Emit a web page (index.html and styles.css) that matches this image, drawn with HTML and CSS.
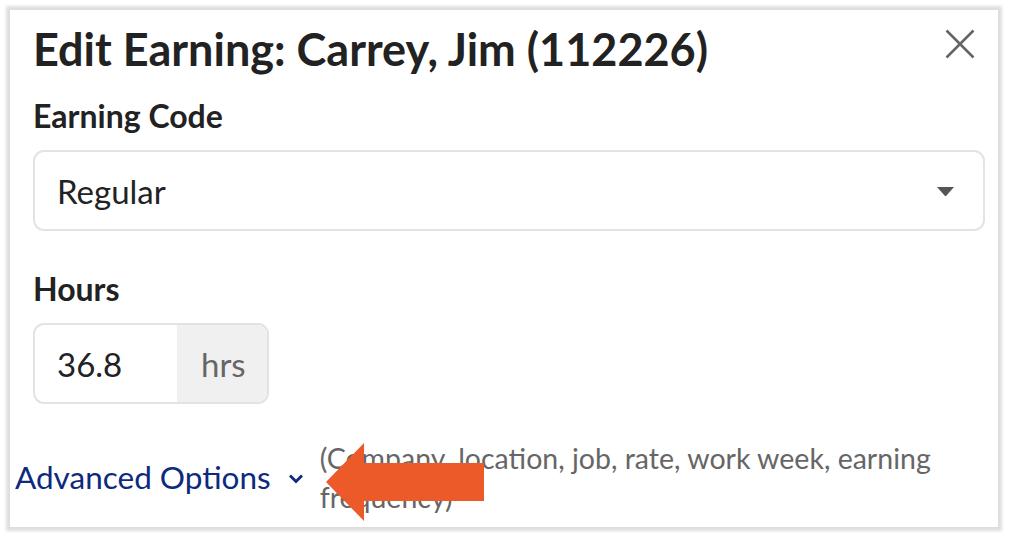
FILE: index.html
```html
<!DOCTYPE html>
<html>
<head>
<meta charset="utf-8">
<link rel="stylesheet" href="styles.css">
</head>
<body>
<div class="panel">
  <div class="header">
    <h1 class="title">Edit Earning: Carrey, Jim (112226)</h1>
    <button class="close" aria-label="Close">
      <svg width="30" height="30" viewBox="0 0 30 30"><path d="M1.5 1.5 L28.5 28.5 M28.5 1.5 L1.5 28.5" stroke="#666" stroke-width="2.6" fill="none"/></svg>
    </button>
  </div>
  <div class="field">
    <div class="label">Earning Code</div>
    <div class="select">
      <span class="select-value">Regular</span>
      <svg class="caret" width="17" height="9" viewBox="0 0 17 9"><path d="M0 0 H17 L9.5 8.5 Q8.5 9.5 7.5 8.5 Z" fill="#555"/></svg>
    </div>
  </div>
  <div class="field field-hours">
    <div class="label">Hours</div>
    <div class="input-group">
      <span class="input-value">36.8</span>
      <span class="addon">hrs</span>
    </div>
  </div>
  <div class="advanced">
    <a class="adv-link">Advanced Options
      <svg class="chev" width="16" height="11" viewBox="0 0 16 11"><path d="M2 2.5 L8 8.5 L14 2.5" stroke="#0d2a7e" stroke-width="2.8" fill="none"/></svg>
    </a>
    <p class="adv-desc">(Company, location, job, rate, work week, earning frequency)</p>
    <svg class="arrow" width="160" height="80" viewBox="0 0 160 80"><polygon points="0,39 38,0 38,20 158,20 158,58 38,58 38,78" fill="#ec5a2a"/></svg>
  </div>
</div>
</body>
</html>
```
FILE: styles.css
```css
html, body {
  margin: 0;
  padding: 0;
  background: #fff;
}
body {
  padding: 10px 0 11px 10px;
  font-family: "Lato", "Open Sans", sans-serif;
  color: #222;
}
.panel {
  width: 988px;
  height: 517px;
  box-sizing: border-box;
  background: #fff;
  box-shadow: 0 0 3px 4px #dedede;
  padding: 11px 14px 0 23px;
  position: relative;
  overflow: hidden;
}
.header {
  display: flex;
  justify-content: space-between;
  align-items: flex-start;
}
.title {
  margin: 0;
  font-size: 45px;
  font-weight: 700;
  line-height: 56px;
  color: #222;
}
.close {
  border: none;
  background: none;
  padding: 0;
  margin: 8px 9px 0 0;
  width: 30px;
  height: 30px;
}
.field {
  margin-top: 19px;
}
.field-hours {
  margin-top: 38px;
}
.label {
  font-size: 32px;
  font-weight: 700;
  line-height: 40px;
  color: #222;
}
.select {
  margin-top: 14px;
  width: 952px;
  height: 81px;
  box-sizing: border-box;
  border: 2px solid #e3e3e3;
  border-radius: 11px;
  display: flex;
  align-items: center;
  justify-content: space-between;
  padding: 0 29px 0 22px;
}
.select-value {
  font-size: 33px;
  color: #222;
}
.caret {
  margin-top: 2px;
}
.input-group {
  margin-top: 14px;
  width: 236px;
  height: 81px;
  box-sizing: border-box;
  border: 2px solid #e3e3e3;
  border-radius: 11px;
  display: flex;
  overflow: hidden;
}
.input-value {
  width: 142px;
  box-sizing: border-box;
  padding-left: 22px;
  display: flex;
  align-items: center;
  font-size: 33px;
  color: #222;
}
.addon {
  flex: 1;
  background: #f0f0f0;
  display: flex;
  align-items: center;
  padding-left: 24px;
  font-size: 33px;
  color: #666;
}
.advanced {
  position: relative;
  display: flex;
  align-items: flex-start;
  margin: 35px 0 0 -18px;
}
.adv-link {
  font-size: 31.5px;
  color: #0d2a7e;
  line-height: 40px;
  margin-top: 18px;
  white-space: nowrap;
  display: flex;
  align-items: center;
}
.chev {
  margin-left: 17px;
  margin-top: 2px;
}
.adv-desc {
  margin: 0 0 0 16px;
  width: 640px;
  font-size: 28.5px;
  line-height: 39px;
  color: #666;
}
.arrow {
  position: absolute;
  left: 311px;
  top: 4px;
}
```
